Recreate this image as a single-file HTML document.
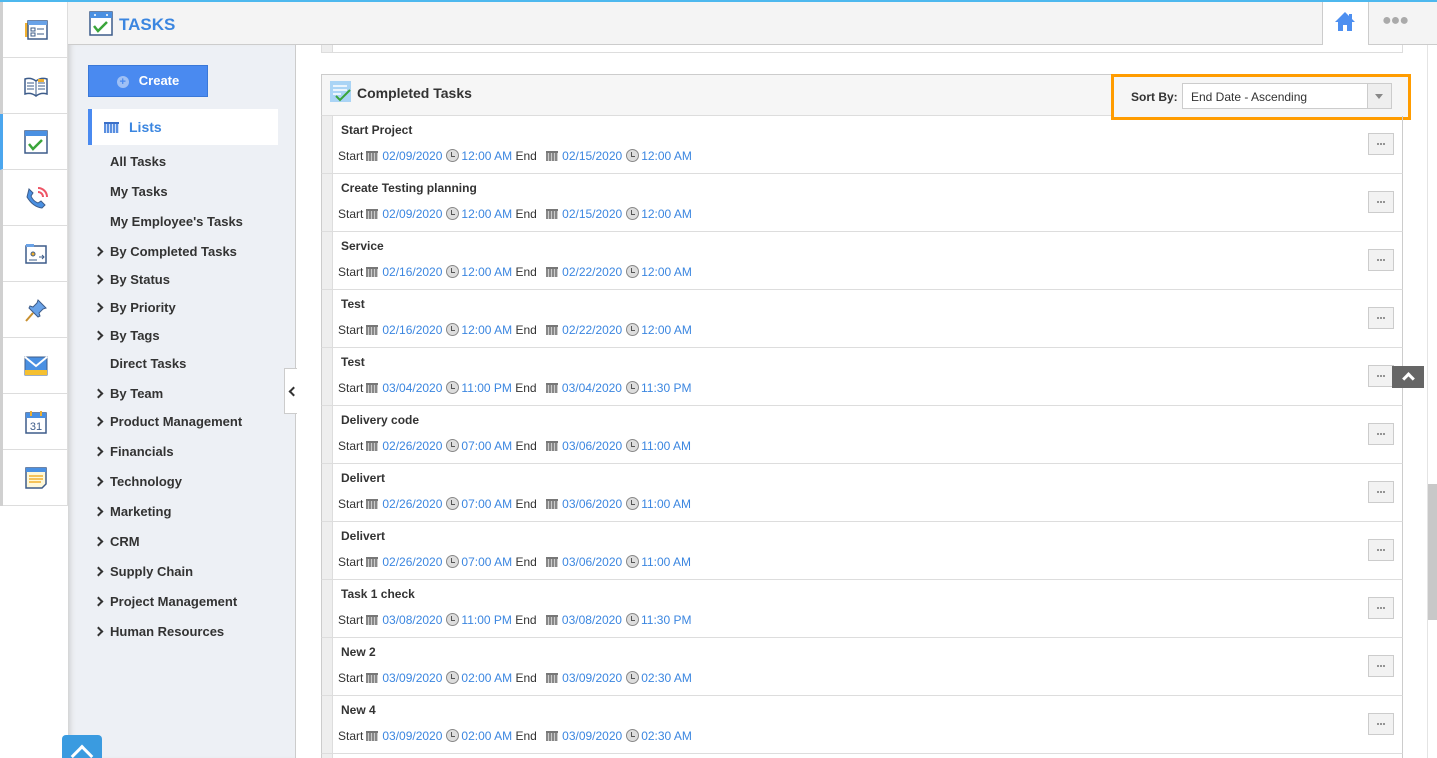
<!DOCTYPE html>
<html style="width:1437px;height:758px;overflow:hidden"><head><meta charset="utf-8"><style>
*{margin:0;padding:0;box-sizing:border-box}
body{width:1437px;height:758px;overflow:hidden;position:relative;font-family:"Liberation Sans",Arial,sans-serif;background:#fff;color:#333}
.abs{position:absolute}
.topline{left:0;top:0;width:1437px;height:2px;background:#4db8ee}
.iconcol{left:0;top:2px;width:68px;height:504px;background:#fff;border-left:3px solid #d0d0d0;border-right:1px solid #ddd}
.ic{position:absolute;left:0;width:65px;height:56px;border-bottom:1px solid #ddd;display:flex;align-items:center;justify-content:center}
.ic.act{border-left:3px solid #4ba6ee;left:-3px;width:68px}
.header{left:68px;top:2px;width:1369px;height:43px;background:#f4f4f4;border-bottom:1px solid #ccc}
.nav{left:68px;top:45px;width:228px;height:713px;background:#edf0f5;border-right:1px solid #ccc;box-shadow:inset 6px 0 6px -4px #ccc}
.nv{position:absolute;left:42px;font-size:13px;font-weight:bold;color:#333;line-height:16px;margin-top:1px}
.chev{position:absolute;left:27px;width:7px;height:7px;border-right:2px solid #333;border-top:2px solid #333;transform:rotate(45deg);margin-top:1px}
.row{position:absolute;left:321px;width:1082px;height:58px;border-bottom:1px solid #ddd;border-left:1px solid #ccc;border-right:1px solid #ccc}
.row .strip{position:absolute;left:0;top:0;width:11px;height:57px;background:#eee;border-right:1px solid #ddd}
.row .t{position:absolute;left:19px;top:7px;font-size:12px;font-weight:bold;color:#333}
.row .d{position:absolute;left:16px;top:33px;font-size:12px;color:#333;white-space:nowrap}
.d .b{color:#3b86e0}
.cal{display:inline-block;width:12px;height:10px;vertical-align:-1px;margin:0 4px 0 3px;background:repeating-linear-gradient(90deg,#888 0 2px,#ccc 2px 3px);border-top:2px solid #777}
.clk{display:inline-block;width:13px;height:13px;border:1px solid #888;border-radius:50%;background:#ddd;vertical-align:-2px;margin:0 2px 0 4px;position:relative}
.clk:after{content:"";position:absolute;left:4px;top:2px;width:3px;height:4px;border-left:1px solid #555;border-bottom:1px solid #555}
.btn{position:absolute;right:8px;top:17px;width:26px;height:22px;background:#f2f2f2;border:1px solid #ccc}
.btn:after{content:"";position:absolute;left:8px;top:9px;width:2px;height:2px;background:#777;box-shadow:3px 0 #777,6px 0 #777;border-radius:1px}
</style></head><body>
<div class="abs topline"></div>
<div class="abs header">
 <svg class="abs" style="left:21px;top:9px" width="24" height="25" viewBox="0 0 24 25"><rect x="1" y="1" width="22" height="23" fill="#fff" stroke="#3d5c8a" stroke-width="1.5"/><rect x="1" y="1" width="22" height="6" fill="#4a90e2"/><circle cx="6" cy="4" r="1" fill="#fff"/><circle cx="18" cy="4" r="1" fill="#fff"/><path d="M5 15l4 5 9-9" stroke="#3aa53a" stroke-width="2.5" fill="none"/></svg>
 <div class="abs" style="left:51px;top:13px;font-size:17px;font-weight:bold;color:#3b86e0">TASKS</div>
 <div class="abs" style="left:1254px;top:0;width:47px;height:43px;background:#fff;border-left:1px solid #ccc;border-right:1px solid #ccc"></div>
 <svg class="abs" style="left:1266px;top:9px" width="22" height="21" viewBox="0 0 22 21"><path d="M11 1L1 11h3v9h5v-6h4v6h5v-9h3L18 8V3h-3v2z" fill="#4d8ff0"/></svg>
 <div class="abs" style="left:1314px;top:10px;font-size:16px;color:#aaa;letter-spacing:-1px">●●●</div>
</div>
<div class="abs iconcol">
 <div class="ic" style="top:0"><svg width="24" height="22"><rect x="1" y="4" width="4" height="14" fill="#f0b030"/><rect x="4" y="2" width="19" height="18" fill="#fff" stroke="#3d5c8a" stroke-width="1.5"/><rect x="4" y="2" width="19" height="4" fill="#6aa3e8"/><rect x="7" y="9" width="4" height="3" fill="none" stroke="#3d5c8a"/><rect x="7" y="14" width="4" height="3" fill="none" stroke="#3d5c8a"/><path d="M13 10h7M13 15h7" stroke="#3d5c8a"/></svg></div>
 <div class="ic" style="top:56px"><svg width="24" height="22"><path d="M1 4q6-2 11 2q5-4 11-2v15q-6-2-11 2q-5-4-11-2z" fill="#fff" stroke="#3d5c8a" stroke-width="1.5"/><path d="M12 6v15M3 8h7M3 11h7M3 14h7M14 8h7M14 11h7M14 14h7" stroke="#3d5c8a"/><rect x="14" y="4" width="6" height="3" fill="#f0b030"/></svg></div>
 <div class="ic act" style="top:112px"><svg width="24" height="24"><rect x="1" y="1" width="22" height="22" fill="#fff" stroke="#3d5c8a" stroke-width="1.5"/><rect x="1" y="1" width="22" height="5" fill="#4a90e2"/><path d="M5 14l4 5 9-9" stroke="#3aa53a" stroke-width="2.5" fill="none"/></svg></div>
 <div class="ic" style="top:168px"><svg width="24" height="24"><path d="M5 3l4 4-2 3q2 5 7 7l3-2 4 4-3 3q-9-1-15-11z" fill="#4a90e2" stroke="#3d5c8a"/><path d="M14 6a5 5 0 0 1 5 5M14 2a9 9 0 0 1 9 9" stroke="#ee5566" stroke-width="2" fill="none"/></svg></div>
 <div class="ic" style="top:224px"><svg width="22" height="22"><rect x="1" y="3" width="20" height="17" fill="#fff" stroke="#3d5c8a" stroke-width="1.5"/><rect x="1" y="1" width="8" height="3" fill="#6aa3e8"/><circle cx="8" cy="11" r="2" fill="#f0b030" stroke="#3d5c8a"/><path d="M4 17h8M14 14h5M17 12l2 2-2 2" stroke="#3d5c8a" fill="none"/></svg></div>
 <div class="ic" style="top:280px"><svg width="24" height="24"><path d="M14 2l8 8-3 1-4 4 1 3-2 1-9-9 1-2 3 1 4-4z" fill="#6aa3e8" stroke="#3d5c8a"/><path d="M9 15l-7 8" stroke="#c89030" stroke-width="2"/></svg></div>
 <div class="ic" style="top:336px"><svg width="24" height="20"><rect x="1" y="1" width="22" height="18" fill="#4a90e2" stroke="#3d5c8a"/><rect x="1" y="14" width="22" height="5" fill="#f5c030"/><path d="M1 1l11 9 11-9" stroke="#fff" stroke-width="2" fill="none"/></svg></div>
 <div class="ic" style="top:392px"><svg width="22" height="24"><rect x="1" y="3" width="20" height="20" fill="#fff" stroke="#3d5c8a" stroke-width="1.5"/><rect x="1" y="3" width="20" height="5" fill="#4a90e2"/><rect x="5" y="1" width="2" height="5" fill="#f0b030"/><rect x="15" y="1" width="2" height="5" fill="#f0b030"/><text x="11" y="20" font-size="11" text-anchor="middle" fill="#3d5c8a" font-family="Liberation Sans">31</text></svg></div>
 <div class="ic" style="top:448px"><svg width="22" height="22"><path d="M1 1h20v16l-4 4H1z" fill="#fff8d8" stroke="#3d5c8a" stroke-width="1.5"/><rect x="1" y="1" width="20" height="4" fill="#4a90e2"/><path d="M4 9h14M4 12h14M4 15h12" stroke="#f0b030" stroke-width="1.5"/></svg></div>
</div>
<div class="abs nav">
 <div class="abs" style="left:20px;top:20px;width:120px;height:32px;background:#4a8af0;border:1px solid #3a78d8;color:#fff;font-size:13px;font-weight:bold;line-height:30px;text-align:center"><span style="display:inline-block;width:12px;height:12px;border-radius:50%;background:#9fc0f5;color:#4a8af0;font-size:11px;line-height:12px;vertical-align:0;margin-right:10px">+</span>Create</div>
 <div class="abs" style="left:20px;top:64px;width:190px;height:36px;background:#fff;border-left:4px solid #4a8af0"></div>
 <div class="abs" style="left:36px;top:77px;width:15px;height:11px;background:repeating-linear-gradient(90deg,#5a8fe0 0 2px,#cfe0fa 2px 3px);border-top:2px solid #3a6fc8"></div>
 <div class="abs" style="left:61px;top:74px;font-size:14px;font-weight:bold;color:#3b86e0">Lists</div>
 <div class="nv" style="top:108px">All Tasks</div>
 <div class="nv" style="top:138px">My Tasks</div>
 <div class="nv" style="top:168px">My Employee's Tasks</div>
 <div class="chev" style="top:202px"></div><div class="nv" style="top:198px">By Completed Tasks</div>
 <div class="chev" style="top:230px"></div><div class="nv" style="top:226px">By Status</div>
 <div class="chev" style="top:258px"></div><div class="nv" style="top:254px">By Priority</div>
 <div class="chev" style="top:286px"></div><div class="nv" style="top:282px">By Tags</div>
 <div class="nv" style="top:310px">Direct Tasks</div>
 <div class="chev" style="top:344px"></div><div class="nv" style="top:340px">By Team</div>
 <div class="chev" style="top:372px"></div><div class="nv" style="top:368px">Product Management</div>
 <div class="chev" style="top:402px"></div><div class="nv" style="top:398px">Financials</div>
 <div class="chev" style="top:432px"></div><div class="nv" style="top:428px">Technology</div>
 <div class="chev" style="top:462px"></div><div class="nv" style="top:458px">Marketing</div>
 <div class="chev" style="top:492px"></div><div class="nv" style="top:488px">CRM</div>
 <div class="chev" style="top:522px"></div><div class="nv" style="top:518px">Supply Chain</div>
 <div class="chev" style="top:552px"></div><div class="nv" style="top:548px">Project Management</div>
 <div class="chev" style="top:582px"></div><div class="nv" style="top:578px">Human Resources</div>
 <div class="abs" style="left:216px;top:323px;width:13px;height:46px;background:#fff;border:1px solid #ccc;border-right:none"></div>
 <div class="abs" style="left:222px;top:343px;width:7px;height:7px;border-left:2px solid #333;border-bottom:2px solid #333;transform:rotate(45deg)"></div>
</div>
<div class="abs" style="left:62px;top:735px;width:40px;height:23px;background:#3a9be0;border-radius:4px 4px 0 0;overflow:hidden"><div class="abs" style="left:12px;top:13px;width:16px;height:16px;border-left:3px solid #fff;border-top:3px solid #fff;transform:rotate(45deg)"></div></div>
<div class="abs" style="left:321px;top:45px;width:1082px;height:8px;border:1px solid #ddd;border-top:none;background:#fff"></div>
<div class="abs" style="left:322px;top:45px;width:11px;height:7px;background:#eee;border-right:1px solid #ddd"></div>
<div class="abs" style="left:321px;top:74px;width:1082px;height:42px;background:#f6f6f6;border:1px solid #ccc;border-bottom:1px solid #ddd"></div>
<svg class="abs" style="left:330px;top:81px" width="22" height="22"><rect x="0" y="0" width="21" height="21" fill="#aad4f5"/><path d="M3 5h14M3 9h14M3 13h8" stroke="#fff" stroke-width="1.5"/><path d="M6 15l4 4 10-10" stroke="#3aa53a" stroke-width="2" fill="none"/></svg>
<div class="abs" style="left:357px;top:85px;font-size:14px;font-weight:bold;color:#333">Completed Tasks</div>
<div class="abs" style="left:1111px;top:74px;width:300px;height:46px;border:3px solid #ff9c00;background:#f6f6f6"></div>
<div class="abs" style="left:1131px;top:90px;font-size:12px;font-weight:bold;color:#333">Sort By:</div>
<div class="abs" style="left:1182px;top:83px;width:210px;height:26px;background:#fff;border:1px solid #ccc"></div>
<div class="abs" style="left:1191px;top:90px;font-size:12px;color:#333">End Date - Ascending</div>
<div class="abs" style="left:1367px;top:84px;width:24px;height:24px;background:#eee;border-left:1px solid #ccc"></div>
<div class="abs" style="left:1375px;top:94px;width:0;height:0;border-left:4px solid transparent;border-right:4px solid transparent;border-top:5px solid #888"></div>

<div class="row" style="top:116px"><div class="strip"></div><div class="t">Start Project</div><div class="d">Start<span class="cal"></span><span class="b">02/09/2020</span><span class="clk"></span><span class="b">12:00 AM</span> End <span class="cal" style="margin-left:6px"></span><span class="b">02/15/2020</span><span class="clk"></span><span class="b">12:00 AM</span></div><div class="btn"></div></div>
<div class="row" style="top:174px"><div class="strip"></div><div class="t">Create Testing planning</div><div class="d">Start<span class="cal"></span><span class="b">02/09/2020</span><span class="clk"></span><span class="b">12:00 AM</span> End <span class="cal" style="margin-left:6px"></span><span class="b">02/15/2020</span><span class="clk"></span><span class="b">12:00 AM</span></div><div class="btn"></div></div>
<div class="row" style="top:232px"><div class="strip"></div><div class="t">Service</div><div class="d">Start<span class="cal"></span><span class="b">02/16/2020</span><span class="clk"></span><span class="b">12:00 AM</span> End <span class="cal" style="margin-left:6px"></span><span class="b">02/22/2020</span><span class="clk"></span><span class="b">12:00 AM</span></div><div class="btn"></div></div>
<div class="row" style="top:290px"><div class="strip"></div><div class="t">Test</div><div class="d">Start<span class="cal"></span><span class="b">02/16/2020</span><span class="clk"></span><span class="b">12:00 AM</span> End <span class="cal" style="margin-left:6px"></span><span class="b">02/22/2020</span><span class="clk"></span><span class="b">12:00 AM</span></div><div class="btn"></div></div>
<div class="row" style="top:348px"><div class="strip"></div><div class="t">Test</div><div class="d">Start<span class="cal"></span><span class="b">03/04/2020</span><span class="clk"></span><span class="b">11:00 PM</span> End <span class="cal" style="margin-left:6px"></span><span class="b">03/04/2020</span><span class="clk"></span><span class="b">11:30 PM</span></div><div class="btn"></div></div>
<div class="row" style="top:406px"><div class="strip"></div><div class="t">Delivery code</div><div class="d">Start<span class="cal"></span><span class="b">02/26/2020</span><span class="clk"></span><span class="b">07:00 AM</span> End <span class="cal" style="margin-left:6px"></span><span class="b">03/06/2020</span><span class="clk"></span><span class="b">11:00 AM</span></div><div class="btn"></div></div>
<div class="row" style="top:464px"><div class="strip"></div><div class="t">Delivert</div><div class="d">Start<span class="cal"></span><span class="b">02/26/2020</span><span class="clk"></span><span class="b">07:00 AM</span> End <span class="cal" style="margin-left:6px"></span><span class="b">03/06/2020</span><span class="clk"></span><span class="b">11:00 AM</span></div><div class="btn"></div></div>
<div class="row" style="top:522px"><div class="strip"></div><div class="t">Delivert</div><div class="d">Start<span class="cal"></span><span class="b">02/26/2020</span><span class="clk"></span><span class="b">07:00 AM</span> End <span class="cal" style="margin-left:6px"></span><span class="b">03/06/2020</span><span class="clk"></span><span class="b">11:00 AM</span></div><div class="btn"></div></div>
<div class="row" style="top:580px"><div class="strip"></div><div class="t">Task 1 check</div><div class="d">Start<span class="cal"></span><span class="b">03/08/2020</span><span class="clk"></span><span class="b">11:00 PM</span> End <span class="cal" style="margin-left:6px"></span><span class="b">03/08/2020</span><span class="clk"></span><span class="b">11:30 PM</span></div><div class="btn"></div></div>
<div class="row" style="top:638px"><div class="strip"></div><div class="t">New 2</div><div class="d">Start<span class="cal"></span><span class="b">03/09/2020</span><span class="clk"></span><span class="b">02:00 AM</span> End <span class="cal" style="margin-left:6px"></span><span class="b">03/09/2020</span><span class="clk"></span><span class="b">02:30 AM</span></div><div class="btn"></div></div>
<div class="row" style="top:696px"><div class="strip"></div><div class="t">New 4</div><div class="d">Start<span class="cal"></span><span class="b">03/09/2020</span><span class="clk"></span><span class="b">02:00 AM</span> End <span class="cal" style="margin-left:6px"></span><span class="b">03/09/2020</span><span class="clk"></span><span class="b">02:30 AM</span></div><div class="btn"></div></div>
<div class="abs" style="left:321px;top:754px;width:1082px;height:4px;border-left:1px solid #ccc;border-right:1px solid #ccc"><div class="abs" style="left:0;top:0;width:11px;height:4px;background:#eee;border-right:1px solid #ddd"></div></div>

<div class="abs" style="left:1392px;top:366px;width:32px;height:22px;background:#666"></div>
<div class="abs" style="left:1404px;top:374px;width:9px;height:9px;border-left:3px solid #fff;border-top:3px solid #fff;transform:rotate(45deg)"></div>
<div class="abs" style="left:1427px;top:45px;width:1px;height:713px;background:#e4e4e4"></div>
<div class="abs" style="left:1428px;top:484px;width:9px;height:136px;background:#c8c8c8"></div>
</body></html>
